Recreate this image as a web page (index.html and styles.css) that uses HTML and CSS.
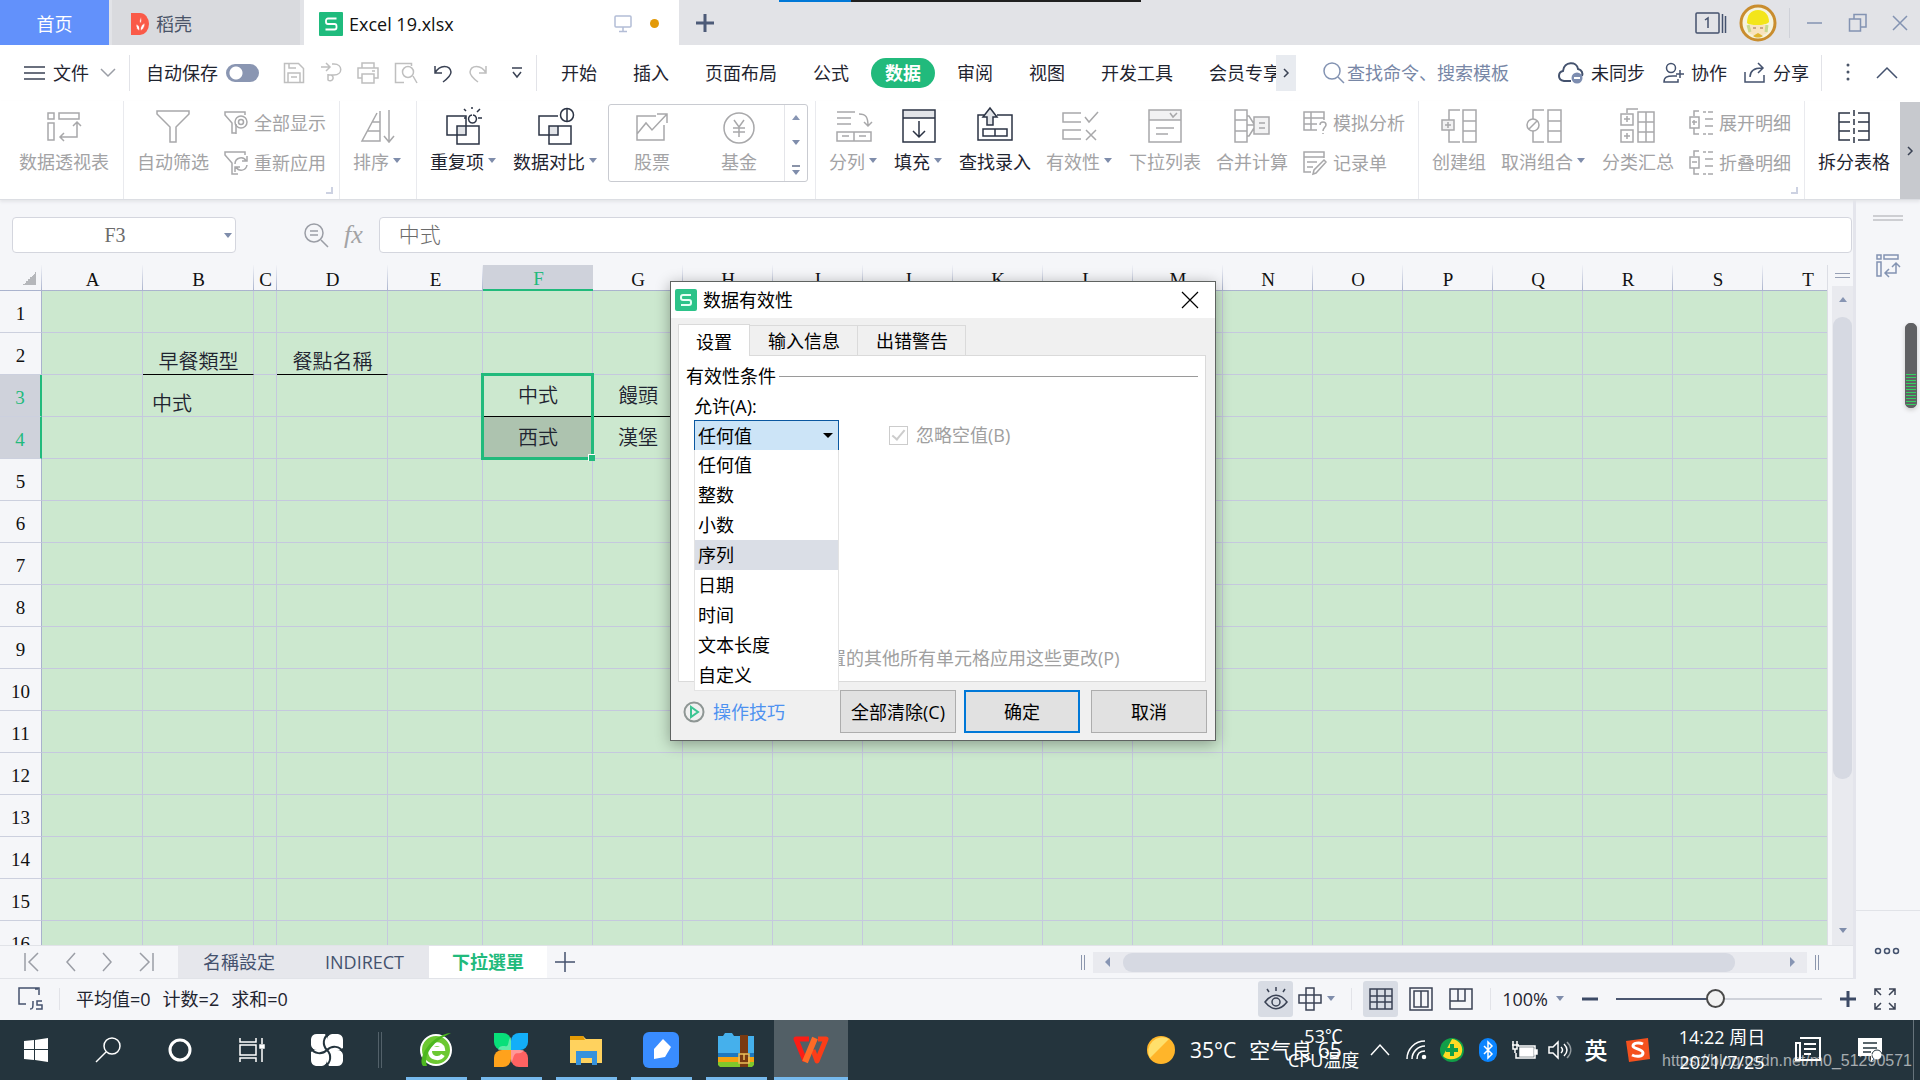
FILE: index.html
```html
<!DOCTYPE html>
<html lang="zh-CN">
<head>
<meta charset="utf-8">
<title>Excel 19.xlsx</title>
<link rel="stylesheet" href="styles.css">
</head>
<body>
<header class="titlebar">
  <div class="top-progress"></div>
  <button class="tab-home">首页</button>
  <button class="tab-docer">
    <svg width="18" height="22" viewBox="0 0 18 22"><path d="M0 0h9a9 11 0 0 1 0 22H0z" fill="#fa5a48"/><path d="M9 19V9M9 18c-3-1-4-3-4-7 3 1 4 3 4 7zM9 18c3-1 5-4 5-8-3 1-5 4-5 8zM9 11c-1-3 0-5 1-7 1 3 1 5-1 7z" fill="#fff" stroke="#fa5a48" stroke-width=".8"/></svg>
    <span>稻壳</span>
  </button>
  <button class="tab-file">
    <svg width="24" height="24" viewBox="0 0 24 24"><rect width="24" height="24" rx="1" fill="#1fbb7d"/><path d="M17.500 6.500H9a2 2 0 0 0-2 2v1.500a2 2 0 0 0 2 2h6.500a2 2 0 0 1 2 2v1.500a2 2 0 0 1-2 2H6.500" fill="none" stroke="#fff" stroke-width="1.800"/></svg>
    <span class="grow">Excel 19.xlsx</span>
    <svg class="line blue" width="18" height="18" viewBox="0 0 18 18"><rect x="1" y="1" width="16" height="11" rx="1"/><path d="M9 12v4M5 16.500h8"/></svg>
    <i class="dirty"></i>
  </button>
  <button class="plain add-tab" aria-label="新建"><svg width="20" height="20" viewBox="0 0 20 20"><path d="M10 1v18M1 10h18" stroke="#4d5b78" stroke-width="3"/></svg></button>
  <div class="window-tools">
    <svg class="line slate" width="32" height="24" viewBox="0 0 32 24"><rect x="1" y="2" width="23" height="20" rx="1"/><path d="M10 9l3-2v10M27.500 3v19M30.500 5v17"/></svg>
    <svg width="38" height="38" viewBox="0 0 38 38"><circle cx="19" cy="19" r="17" fill="#f5f3dd" stroke="#c98d2e" stroke-width="3"/><path d="M8 19c0-8 4-13 11-13s11 5 11 12c-3 4-19 4-22 1z" fill="#f3e51b"/><path d="M10 21h18l1 7c-5 5-15 5-20 0z" fill="#f8e3bd"/><path d="M9 21l2 7M28 21l-1 7" stroke="#c8d98d" stroke-width="3"/><path d="M14 32l5-3 5 3c-3 2-7 2-10 0z" fill="#e0b52e"/><path d="M14 24h3M21 24h3" stroke="#9b6b4b"/></svg>
    <i class="rule"></i>
    <svg class="line steel" width="18" height="18" viewBox="0 0 18 18"><path d="M1 9h15"/></svg>
    <svg class="line steel" width="20" height="20" viewBox="0 0 20 20"><rect x="1.500" y="6" width="11" height="12"/><path d="M6 6V1.500h12V14h-5"/></svg>
    <svg class="line steel" width="16" height="18" viewBox="0 0 16 18"><path d="M1 2l14 14M15 2L1 16"/></svg>
  </div>
</header>

<nav class="menubar">
  <button class="plain file-menu">
    <svg class="line dark" width="21" height="16" viewBox="0 0 21 16"><path d="M0 2h21M0 8h21M0 14h21"/></svg>
    <span>文件</span>
    <svg class="line gray" width="16" height="10" viewBox="0 0 16 10"><path d="M1 1l7 7 7-7"/></svg>
  </button>
  <i class="rule"></i>
  <label class="autosave">自动保存 <input type="checkbox" class="switch"></label>
  <div class="quick">
    <svg class="line pale" width="22" height="22" viewBox="0 0 22 22"><path d="M1.500 1.500h14l5 5v14h-19zM5 20V11h12v9M8 15h6M6 2v4h7"/></svg>
    <svg class="line pale" width="22" height="22" viewBox="0 0 22 22"><path d="M1 5h9M6 1l4 4-4 4M12 2h2c9 0 9 11 0 11H8v-1M8 12v6a3 3 0 1 0 3-5"/></svg>
    <svg class="line pale" width="22" height="22" viewBox="0 0 22 22"><path d="M5 6V1h12v5M5 16H1V6h20v10h-4M5 12h12v9H5zM15 9h3"/></svg>
    <svg class="line pale" width="24" height="22" viewBox="0 0 24 22"><path d="M10 20.500H1.500v-19h16V4M19 14l4 7"/><circle cx="14" cy="10" r="5.500"/></svg>
    <svg class="line dark" width="20" height="20" viewBox="0 0 20 20"><path d="M2 3v7h7M2 10c5-9 15-8 16-1 0 4-4 7-8 10"/></svg>
    <svg class="line pale" width="20" height="20" viewBox="0 0 20 20"><path d="M18 3v7h-7M18 10C13 1 3 2 2 9c0 4 4 7 8 10"/></svg>
    <svg class="line dark" width="12" height="12" viewBox="0 0 12 12"><path d="M1 1h10M2 5l4 5 4-5"/></svg>
  </div>
  <i class="rule"></i>
  <div class="menu-tabs">
    <button>开始</button><button>插入</button><button>页面布局</button><button>公式</button><button class="active">数据</button><button>审阅</button><button>视图</button><button>开发工具</button><button>会员专享</button>
  </div>
  <button class="tabs-more" aria-label="更多"><svg class="line dark" width="6" height="10" viewBox="0 0 6 10"><path d="M1 1l4 4-4 4"/></svg></button>
  <label class="search">
    <svg class="line steel" width="22" height="22" viewBox="0 0 22 22"><circle cx="9" cy="9" r="8"/><path d="M15 15l6 6"/></svg>
    <input type="text" placeholder="查找命令、搜索模板">
  </label>
  <button class="plain act">
    <svg class="line slate" width="26" height="22" viewBox="0 0 26 22"><path d="M13 19H6C-1 18 0 10 5 9 6-1 19-1 20 7c4 1 5 4 4 7" stroke-width="2"/><circle cx="19" cy="16" r="5.500" fill="#7d8db0" stroke="none"/><path d="M16 16h6" stroke="#fff" stroke-width="2"/></svg>
    <span>未同步</span>
  </button>
  <button class="plain act">
    <svg class="line slate" width="22" height="22" viewBox="0 0 22 22"><circle cx="9" cy="6" r="4.500"/><path d="M15 14h-4c-6 0-9 1-9 6h14v-3M18 8v8M14 12h8"/></svg>
    <span>协作</span>
  </button>
  <button class="plain act">
    <svg class="line slate" width="22" height="22" viewBox="0 0 22 22"><path d="M1 10v10h19v-7M6 15c0-7 5-9 12-9M14 1l5 5-5 5"/></svg>
    <span>分享</span>
  </button>
  <i class="rule"></i>
  <div class="menu-end">
    <svg width="4" height="20" viewBox="0 0 4 20" fill="#4a5568"><circle cx="2" cy="2" r="1.500"/><circle cx="2" cy="9" r="1.500"/><circle cx="2" cy="16" r="1.500"/></svg>
    <svg class="line slate" width="22" height="12" viewBox="0 0 22 12"><path d="M1 11L11 1l10 10"/></svg>
  </div>
</nav>

<section class="ribbon">
  <div class="group">
    <button class="tool off"><svg width="36" height="36" viewBox="0 0 36 36"><path d="M2 5h6v6H2zM13 5h20v6H13zM2 15h6v17H2zM14 29h17V14M27 18l4-4 4 4M18 25l-4 4 4 4"/></svg><span>数据透视表</span></button>
  </div>
  <div class="group">
    <button class="tool off"><svg width="36" height="36" viewBox="0 0 36 36"><path d="M2 3h32v3L21 19v15h-6V19L2 6z"/></svg><span>自动筛选</span></button>
    <div class="pair">
      <button class="mini"><svg width="24" height="24" viewBox="0 0 24 24"><path d="M12 22H8V12L1 4V1h20v3M12 13v10"/><circle cx="17" cy="11" r="6"/><circle cx="17" cy="11" r="2.500"/></svg>全部显示</button>
      <button class="mini"><svg width="24" height="24" viewBox="0 0 24 24"><path d="M14 23H8V12L1 4V1h20v3M11 13c0-7 9-8 11-3M23 5v5h-5M23 14c-1 6-8 7-11 2M11 21v-5h5"/></svg>重新应用</button>
    </div>
    <i class="corner"></i>
  </div>
  <div class="group">
    <button class="tool off"><svg width="36" height="36" viewBox="0 0 36 36"><path d="M20 3v30H2L17 5M12 14h8M7 23h13M29 2v31M24 28l5 6 5-6"/></svg><span class="has-caret">排序</span></button>
  </div>
  <div class="group wide">
    <button class="tool"><svg width="36" height="36" viewBox="0 0 36 36"><path class="shade" d="M11 18h9v9h-9z"/><path d="M1 8h19v19H1zM11 18h22v18H11zM26 7a4 4 0 1 0 1 0M26 1V-1M20 3l-2-2M31 4l3-3M32 10h4M20 10h-2"/></svg><span class="has-caret">重复项</span></button>
    <button class="tool"><svg width="36" height="36" viewBox="0 0 36 36"><path class="shade" d="M11 18h9v9h-9z"/><path d="M20 8H1v19h19V18M11 18h22v18H11zM29 0v14"/><circle cx="29" cy="7" r="6.500"/></svg><span class="has-caret">数据对比</span></button>
    <div class="gallery">
      <button class="tool off"><svg width="36" height="36" viewBox="0 0 36 36"><path d="M22 8H3v24h27V17M3 26l9-11 6 7L33 6M23 6h10v9"/></svg><span>股票</span></button>
      <button class="tool off"><svg width="36" height="36" viewBox="0 0 36 36"><circle cx="18" cy="20" r="15"/><path d="M13 12l5 7 5-7M18 19v10M12 20h12M12 24h12"/></svg><span>基金</span></button>
      <div class="spin"><i class="tri up"></i><i class="tri"></i><i class="tri bar"></i></div>
    </div>
  </div>
  <div class="group">
    <button class="tool off"><svg width="36" height="36" viewBox="0 0 36 36"><path d="M1 4h18M1 10h14M1 16h14M23 6c7 0 9 3 9 12M28 14l4 4 4-4M1 24h34v9H1zM18 24v9M6 28h7M23 28h7"/></svg><span class="has-caret">分列</span></button>
    <button class="tool"><svg width="36" height="36" viewBox="0 0 36 36"><path class="shade" d="M2 2h32v8H2z"/><path d="M2 2h32v32H2zM2 10h32M18 13v15M12 23l6 6 6-6"/></svg><span class="has-caret">填充</span></button>
    <button class="tool"><svg width="36" height="36" viewBox="0 0 36 36"><path d="M7 7H1v25h34V7H20M6 21h24v7H6zM18 21v7"/><path class="shade ink" d="M10 17V9H6l7-9 7 9h-4v8z"/></svg><span>查找录入</span></button>
    <button class="tool off"><svg width="36" height="36" viewBox="0 0 36 36"><path d="M19 5H1v9h18M19 22H1v9h18M23 9l4 5 9-10M24 22l10 10M34 22L24 32"/></svg><span class="has-caret">有效性</span></button>
    <button class="tool off"><svg width="36" height="36" viewBox="0 0 36 36"><path class="shade" d="M2 2h32v10H2z"/><path d="M2 2h32v32H2zM2 12h32M23 5l3 4 4-4M9 20h18M9 26h12"/></svg><span>下拉列表</span></button>
    <button class="tool off"><svg width="36" height="36" viewBox="0 0 36 36"><path class="shade" d="M20 9h15v17H20z"/><path d="M1 2h12v32H1zM1 12h12M1 23h12M13 8h2l5 8M13 17h7M13 28h2l5-8M20 9h15v17H20zM25 15h6M25 20h6"/></svg><span>合并计算</span></button>
    <div class="pair">
      <button class="mini"><svg width="24" height="24" viewBox="0 0 24 24"><path d="M14 19H1V1h20v8M1 7h20M1 13h13M8 1v18M17 14c0-4 6-4 6 0 0 2-3 3-3 6M20 22v1"/></svg>模拟分析</button>
      <button class="mini"><svg width="24" height="24" viewBox="0 0 24 24"><path d="M8 21H1V1h20v6M1 6h20M4 11h10M4 16h6M23 11L13 22l-3 1 1-4L21 9z"/></svg>记录单</button>
    </div>
  </div>
  <div class="group">
    <button class="tool off"><svg width="36" height="36" viewBox="0 0 36 36"><path class="shade" d="M1 12h12v10H1z"/><path d="M19 2H8v10M8 22v12h11M1 12h12v10H1zM4 17h6M7 14v6M22 2h13v32H22zM22 13h13M22 23h13"/></svg><span>创建组</span></button>
    <button class="tool off"><svg width="36" height="36" viewBox="0 0 36 36"><path d="M18 2H7v9M7 23v11h11M22 2h13v32H22zM22 13h13M22 23h13M3 21L11 13"/><circle cx="7" cy="17" r="6"/></svg><span class="has-caret">取消组合</span></button>
    <button class="tool off"><svg width="36" height="36" viewBox="0 0 36 36"><path d="M7 5V1h11M1 6h12v11H1zM1 22h12v12H1zM4 11h6M7 8v6M4 28h6M7 25v6M18 4h16v30H18zM26 4v30M18 14h16M18 24h16"/></svg><span>分类汇总</span></button>
    <div class="pair">
      <button class="mini"><svg width="24" height="24" viewBox="0 0 24 24"><path d="M10 0H5v5M5 17v6h5M1 6h9v11H1zM3 11h5M5 9v5M14 1h3M19 1h5M16 8h8M16 15h8M14 23h3M19 23h5"/></svg>展开明细</button>
      <button class="mini"><svg width="24" height="24" viewBox="0 0 24 24"><path d="M10 0H5v5M5 17v6h5M1 6h9v11H1zM3 11h5M14 1h3M19 1h5M16 8h8M16 15h8M14 23h3M19 23h5"/></svg>折叠明细</button>
    </div>
    <i class="corner"></i>
  </div>
  <div class="group last">
    <button class="tool"><svg width="36" height="36" viewBox="0 0 36 36"><path d="M14 5H3v27h11M22 5h11v27H22M3 14h11M3 23h11M22 14h11M22 23h11"/><path d="M18 2v34" stroke-dasharray="6 3"/></svg><span>拆分表格</span></button>
  </div>
  <button class="ribbon-more" aria-label="更多"><svg class="line dark" width="6" height="10" viewBox="0 0 6 10"><path d="M1 1l4 4-4 4"/></svg></button>
</section>

<main class="workspace">
  <div class="book">
    <div class="formula-row">
      <div class="namebox"><input type="text" value="F3" aria-label="名称框"><i class="tri"></i></div>
      <div class="fx">
        <svg class="line gray" width="25" height="25" viewBox="0 0 25 25"><circle cx="10" cy="10" r="9"/><path d="M17 17l7 7M6 8h8M6 12h8"/></svg>
        <span>fx</span>
      </div>
      <input class="formula" type="text" value="中式" aria-label="编辑栏">
    </div>
    <div class="sheet-row">
      <div class="sheet">
        <table class="cells">
          <colgroup id="cols"></colgroup>
          <thead id="head"></thead>
          <tbody id="body"></tbody>
        </table>
      </div>
      <div class="vscroll">
        <i class="split"></i>
        <div class="vtrack"><i class="tri up"></i><i class="vthumb"></i><i class="tri"></i></div>
      </div>
    </div>
    <div class="sheet-tabs">
      <div class="sheet-nav">
        <svg class="line gray" width="16" height="20" viewBox="0 0 16 20"><path d="M1 1v18M14 1L5 10l9 9"/></svg>
        <svg class="line gray" width="10" height="20" viewBox="0 0 10 20"><path d="M9 1L1 10l8 9"/></svg>
        <svg class="line gray" width="10" height="20" viewBox="0 0 10 20"><path d="M1 1l8 9-8 9"/></svg>
        <svg class="line gray" width="16" height="20" viewBox="0 0 16 20"><path d="M15 1v18M2 1l9 9-9 9"/></svg>
      </div>
      <button class="stab">名稱設定</button><button class="stab">INDIRECT</button><button class="stab active">下拉選單</button>
      <button class="plain add-sheet" aria-label="新建工作表"><svg class="line slate" width="20" height="20" viewBox="0 0 20 20"><path d="M10 0v20M0 10h20"/></svg></button>
      <div class="hscroll">
        <i class="grip"></i>
        <div class="htrack"><i class="tri left"></i><i class="hthumb"></i><i class="tri right"></i></div>
        <i class="grip"></i>
      </div>
    </div>
  </div>
  <aside class="side">
    <i class="side-grip"></i>
    <svg class="line steel" width="24" height="24" viewBox="0 0 24 24"><path d="M1 1h4v4H1zM8 1h14v4H8zM1 8h4v14H1zM10 19h10V10M16 13l4-4 4 4M13 15l-4 4 4 4"/></svg>
    <div class="side-foot"><svg class="line slate" width="26" height="8" viewBox="0 0 26 8"><circle cx="4" cy="4" r="2.500"/><circle cx="13" cy="4" r="2.500"/><circle cx="22" cy="4" r="2.500"/></svg></div>
    <div class="meter"></div>
  </aside>
</main>

<footer class="status">
  <svg class="line slate" width="25" height="24" viewBox="0 0 25 24"><path d="M8 17H1V1h20v7M17 2h3M12 22c3 0 3-1 3-8M24 14h-5v4h5v4h-6"/></svg>
  <i class="rule"></i>
  <div class="stats"><span>平均值=0</span><span>计数=2</span><span>求和=0</span></div>
  <div class="views">
    <button class="view on" aria-label="护眼"><svg class="line dark" width="26" height="24" viewBox="0 0 26 24"><path d="M2 15c7-9 15-9 22 0-7 9-15 9-22 0zM13 0v4M4 2l2 3M22 2l-2 3"/><circle cx="13" cy="15" r="4"/></svg></button>
    <svg class="line dark" width="24" height="24" viewBox="0 0 24 24"><path d="M8 1h8v22H8zM1 8h22v8H1z"/></svg>
    <i class="tri"></i>
    <i class="rule"></i>
    <button class="view on" aria-label="普通视图"><svg class="line dark" width="24" height="22" viewBox="0 0 24 22"><path d="M1 1h22v20H1zM1 8h22M1 14h22M8 1v20M16 1v20"/></svg></button>
    <button class="view" aria-label="分页预览"><svg class="line dark" width="24" height="24" viewBox="0 0 24 24"><path d="M1 1h22v22H1zM5 4h14v16H5zM12 4v16"/></svg></button>
    <button class="view" aria-label="阅读版式"><svg class="line dark" width="24" height="24" viewBox="0 0 24 24"><path d="M1 2h22v20H1zM1 14h15V2M9 2v12"/></svg></button>
    <i class="rule"></i>
    <span class="percent">100%</span><i class="tri"></i>
  </div>
  <div class="zoom">
    <svg width="16" height="16" viewBox="0 0 16 16"><path d="M0 8h16" stroke="#3c4a66" stroke-width="3"/></svg>
    <input type="range" min="0" max="100" value="48" aria-label="缩放">
    <svg width="16" height="16" viewBox="0 0 16 16"><path d="M0 8h16M8 0v16" stroke="#3c4a66" stroke-width="3"/></svg>
    <svg class="line dark" width="22" height="22" viewBox="0 0 22 22"><path d="M1 7V1h6M1 1l6 6M15 1h6v6M21 1l-6 6M1 15v6h6M1 21l6-6M21 15v6h-6M21 21l-6-6"/></svg>
  </div>
</footer>

<footer class="taskbar">
  <div class="sys"><svg width="24" height="24" viewBox="0 0 24 24"><path fill="#fff" d="M0 3l10-1v9H0zM11 2l13-2v11H11zM0 12h10v10L0 21zM11 12h13v12l-13-2z"/></svg></div>
  <div class="sys"><svg class="line white" width="26" height="26" viewBox="0 0 26 26"><circle cx="17" cy="9" r="8"/><path d="M11 15L1 25"/></svg></div>
  <div class="sys"><svg width="26" height="26" viewBox="0 0 26 26"><circle cx="13" cy="13" r="10" fill="none" stroke="#fff" stroke-width="3"/></svg></div>
  <div class="sys"><svg class="line white" width="26" height="26" viewBox="0 0 26 26"><path d="M1 1v4h16V1M1 8h16v10H1zM1 25v-4h16v4M23 1v6M23 12v13"/><path d="M21 8h4v3h-4z" fill="#fff"/></svg></div>
  <div class="sys wide"><svg width="32" height="32" viewBox="0 0 32 32"><g fill="#fff"><path d="M6 0h8l2 4v12H6a6 6 0 0 1-6-5V5a6 6 0 0 1 6-5z"/><path d="M32 6v8l-4 2H16V6a6 6 0 0 1 5-6h6a6 6 0 0 1 5 6z"/><path d="M26 32h-8l-2-4V16h10a6 6 0 0 1 6 5v6a6 6 0 0 1-6 5z"/><path d="M0 26v-8l4-2h12v10a6 6 0 0 1-5 6H5a6 6 0 0 1-5-6z"/></g><path d="M18 0C12 3 11 11 16 16M32 18C29 12 21 11 16 16M14 32C20 29 21 21 16 16M0 14C3 20 11 21 16 16" fill="none" stroke="#24343d" stroke-width="2"/></svg></div>
  <i class="double"></i>
  <div class="app"><svg width="36" height="36" viewBox="0 0 36 36"><circle cx="18" cy="18" r="15" fill="#6cc832" stroke="#fff" stroke-width="2"/><path d="M25 23c-3 5-13 4-13-4s12-9 13-2H12" fill="none" stroke="#fff" stroke-width="4"/><path d="M5 34C-1 27 12 3 33 1 17 8 5 21 9 34z" fill="#4cb81f"/></svg></div>
  <div class="app"><svg width="36" height="36" viewBox="0 0 36 36"><path d="M1 1h9a8 8 0 0 1 8 8v9H9a8 8 0 0 1-8-8z" fill="#08df79"/><path d="M35 1h-9a8 8 0 0 0-8 8v9h9a8 8 0 0 0 8-8z" fill="#13aef8"/><path d="M1 35h9a8 8 0 0 0 8-8v-9H9a8 8 0 0 0-8 8z" fill="#ffa21c"/><path d="M35 35h-9a8 8 0 0 1-8-8v-9h9a8 8 0 0 1 8 8z" fill="#ff6262"/><path d="M18 5v13H5c2-6 7-3 9-4s1-7 4-9zM31 18H18v13c2-2 2-7 4-9s6 1 9-4z" fill="#fff" opacity=".35"/></svg></div>
  <div class="app"><svg width="34" height="30" viewBox="0 0 34 30"><path d="M1 1h13l3 3h16v24H1z" fill="#ffd25e"/><path d="M1 1h13l2 4H1z" fill="#e49b05"/><path d="M7 16h21v14h-5v-7H12v7H7z" fill="#3692dd"/></svg></div>
  <div class="app"><svg width="36" height="36" viewBox="0 0 36 36"><rect width="36" height="36" rx="6" fill="#398cff"/><path d="M20 7l8 8-6 10-11 2 0-10z" fill="#fff"/></svg></div>
  <div class="app"><svg width="36" height="34" viewBox="0 0 36 34"><path d="M0 24h36v8l-2 2H2l-2-2z" fill="#80c82b"/><path d="M0 20h36v9H0z" fill="#f4a112"/><path d="M0 3h5l2-3h7l2 3h20v20H0z" fill="#45b0ec"/><path d="M0 20h36v4H0z" fill="#1e78be"/><path d="M22 2h8v32h-8z" fill="#7a3a11"/><path d="M21 21h10v9H21zM26 21v6" fill="none" stroke="#ecc05a" stroke-width="1.500"/></svg></div>
  <div class="app active"><svg width="36" height="28" viewBox="0 0 36 28" fill="none" stroke-width="5" stroke-linejoin="round"><path d="M16 3H3l9 22" stroke="#fb1d16"/><path d="M20 14l4 11 9-22h-8" stroke="#fb3d18"/><path d="M12 26L22 2" stroke="#ff6a26" stroke-width="6"/></svg></div>
  <div class="tray">
    <svg width="28" height="28" viewBox="0 0 28 28"><circle cx="14" cy="14" r="14" fill="#ffb52a"/><path d="M3 22A14 14 0 0 1 22 3z" fill="#ffdf6b"/></svg>
    <div class="weather"><span>35°C</span><span>空气良 65</span><div class="cpu">53℃<br>CPU温度</div></div>
    <div class="cell"><svg class="line white" width="20" height="12" viewBox="0 0 20 12"><path d="M1 11l9-10 9 10"/></svg></div>
    <div class="cell"><svg class="line white" width="20" height="20" viewBox="0 0 20 20"><path d="M1 19C1 9 9 1 19 1M6 19C6 12 12 6 19 6M11 19c0-5 3-8 8-8"/><circle cx="18" cy="17" r="1.500" fill="#fff"/></svg></div>
    <div class="cell"><svg width="24" height="24" viewBox="0 0 24 24"><circle cx="12" cy="12" r="12" fill="#119e48"/><path d="M12 1a11 11 0 0 1 9 16c-6 7-16 4-18 1z" fill="#ffdb24"/><path d="M12 6v12M6 12h12" stroke="#119e48" stroke-width="4"/></svg></div>
    <div class="cell"><svg width="18" height="24" viewBox="0 0 18 24"><rect width="18" height="24" rx="9" fill="#0a84ff"/><path d="M5 8l8 8-4 4V4l4 4-8 8" fill="none" stroke="#fff" stroke-width="1.500"/></svg></div>
    <div class="cell"><svg class="line white" width="26" height="18" viewBox="0 0 26 18"><path d="M7 5h17v12H5v-5M1 4h7M2 0v4M6 0v4M2 4v4h4V4M4 8v4"/><path fill="#fff" d="M9 7h13v8H9zM24 9h2v4h-2z"/></svg></div>
    <div class="cell"><svg class="line white" width="24" height="20" viewBox="0 0 24 20"><path d="M1 7h4l5-5v16l-5-5H1zM13 7c2 2 2 4 0 6M16 4c4 4 4 8 0 12"/><path d="M19 2c5 5 5 11 0 16" opacity=".5"/></svg></div>
    <div class="cell ime">英</div>
    <div class="cell sogou"><svg width="26" height="24" viewBox="0 0 26 24"><path d="M1 3l22-3 2 21-21 3z" fill="#f4511e"/><path d="M18 6c-4-2-10-1-10 2s10 3 10 7-7 4-11 2" fill="none" stroke="#fff" stroke-width="3"/></svg></div>
    <div class="clock">14:22 周日<br>2021/7/25</div>
    <div class="cell notes"><svg class="line white" width="26" height="26" viewBox="0 0 26 26"><path d="M5 1h20v22H1V6h4v17M9 7h12M9 12h12M9 17h7" stroke-width="2"/></svg></div>
    <div class="cell notif"><svg width="26" height="26" viewBox="0 0 26 26"><path d="M1 1h24v18h-6l-5 6v-6H1z" fill="#fff"/><path d="M6 6h14M6 11h14M6 15h8" stroke="#24343d" stroke-width="1.500"/><circle cx="20" cy="18" r="5" fill="#fff" stroke="#24343d"/></svg></div>
    <i class="peek"></i>
  </div>
  <div class="credit">https://blog.csdn.net/m0_51290571</div>
</footer>

<section class="dialog" role="dialog" aria-label="数据有效性">
  <div class="dlg-title">
    <svg width="22" height="22" viewBox="0 0 22 22"><rect width="22" height="22" rx="2" fill="#2cc389"/><path d="M16 6H8a2 2 0 0 0-2 2v1a2 2 0 0 0 2 2h6a2 2 0 0 1 2 2v1a2 2 0 0 1-2 2H6" fill="none" stroke="#e6fff5" stroke-width="2"/></svg>
    <span>数据有效性</span>
    <button class="plain" aria-label="关闭"><svg width="16" height="16" viewBox="0 0 16 16"><path d="M0 0l16 16M16 0L0 16" stroke="#000" stroke-width="1.200"/></svg></button>
  </div>
  <div class="dlg-body">
    <div class="dlg-tabs"><button class="active">设置</button><button>输入信息</button><button>出错警告</button></div>
    <div class="dlg-panel">
      <div class="legend">有效性条件</div>
      <label class="allow" for="allow">允许(A):</label>
      <div class="allow-row">
        <div class="combo">
          <select id="allow"><option>任何值</option></select>
          <ul class="options"><li>任何值</li><li>整数</li><li>小数</li><li class="hover">序列</li><li>日期</li><li>时间</li><li>文本长度</li><li>自定义</li></ul>
        </div>
        <label class="check"><input type="checkbox" checked disabled> 忽略空值(B)</label>
      </div>
      <label class="check apply"><input type="checkbox" disabled> 对有同样设置的其他所有单元格应用这些更改(P)</label>
    </div>
    <div class="dlg-foot">
      <a href="#" class="tips"><svg width="22" height="22" viewBox="0 0 22 22"><circle cx="11" cy="11" r="9.500" fill="none" stroke="#8e9694" stroke-width="2"/><path d="M8 6v10l7-5z" fill="none" stroke="#3cc593" stroke-width="2"/></svg>操作技巧</a>
      <button>全部清除(C)</button><button class="primary">确定</button><button>取消</button>
    </div>
  </div>
</section>
<script src="app.js"></script>
</body>
</html>
```
FILE: styles.css
```css
* { box-sizing: border-box; }
body {
  margin: 0; height: 100vh; display: flex; flex-direction: column; overflow: hidden;
  font: 400 18px/24px "Open Sans", "Noto Sans CJK SC", "Noto Sans CJK TC", sans-serif;
  color: #1f2430; background: #f5f6f9; position: relative;
}
button, input, select { font: inherit; color: inherit; border: 0; background: none; padding: 0; margin: 0; border-radius: 0; }
button { white-space: nowrap; }
svg { display: block; flex: none; overflow: visible; }
i { display: block; flex: none; }
.plain { display: flex; align-items: center; }
.line { fill: none; stroke-width: 1.500px; }
.line.dark { stroke: #3a4254; }
.line.gray { stroke: #9b9ea6; }
.line.pale { stroke: #bfbfbf; }
.line.blue { stroke: #b3bdd6; }
.line.steel { stroke: #8393b2; }
.line.slate { stroke: #44526e; }
.line.white { stroke: #fff; }
.rule { width: 1px; height: 36px; background: #e2e3e8; }
.grow { flex: 1; text-align: left; }
.tri { width: 0; height: 0; border: 4px solid transparent; border-top: 5px solid #7f8dab; border-bottom: 0; }
.tri.up { border-top: 0; border-bottom: 5px solid #8795b3; }
.tri.left { border: 5px solid transparent; border-right-color: #8795b3; border-left: 0; }
.tri.right { border: 5px solid transparent; border-left-color: #8795b3; border-right: 0; }

.titlebar { flex: none; height: 45px; display: flex; background: #e2e3e7; position: relative; }
.top-progress { position: absolute; top: 0; left: 779px; width: 362px; height: 2px; background: linear-gradient(90deg, #0078d7 20%, #202020 20%); }
.tab-home { width: 109px; padding-top: 2px; background: #6291fb; color: #fff; }
.tab-docer { width: 188px; margin: 0 4px 0 3px; padding: 2px 0 0 19px; background: #d9dade; display: flex; align-items: center; gap: 7px; color: #4a5468; }
.tab-file { width: 375px; padding: 2px 20px 0 15px; background: #fff; display: flex; align-items: center; gap: 6px; color: #111; }
.dirty { width: 9px; height: 9px; border-radius: 50%; background: #e39a08; margin-left: 12px; }
.add-tab { margin-left: 16px; }
.window-tools { margin-left: auto; display: flex; align-items: center; gap: 12px; padding-right: 12px; }
.window-tools .steel { margin-left: 4px; margin-right: 8px; }
.window-tools .steel:last-child { margin-right: 0; }
.window-tools .rule { background: #cfd1d8; height: 30px; }

.menubar { flex: none; height: 56px; display: flex; align-items: center; background: #fff; }
.file-menu { padding: 0 13px 0 24px; gap: 8px; }
.file-menu span { margin-right: 3px; }
.autosave { display: flex; align-items: center; gap: 8px; padding: 0 24px 0 16px; white-space: nowrap; }
.switch { appearance: none; width: 33px; height: 18px; border-radius: 9px; background: radial-gradient(circle at 10px 9px, #fff 6px, #8a96b2 7px); }
.quick { display: flex; align-items: center; gap: 15px; padding-right: 13px; }
.quick svg:last-child { margin-left: 8px; }
.menu-tabs { flex: 1; min-width: 0; display: flex; overflow: hidden; padding-left: 6px; }
.menu-tabs button { flex: none; height: 30px; padding: 0 14px; margin: 0 4px; border-radius: 15px; }
.menu-tabs .active { background: #21ba7c; color: #fff; font-weight: 700; }
.tabs-more { width: 20px; height: 36px; background: #e8ebf0; display: grid; place-items: center; }
.search { display: flex; align-items: center; gap: 2px; margin-left: 27px; }
.search input { width: 211px; }
.search input::placeholder { color: #7887a6; opacity: 1; }
.act { gap: 7px; margin-right: 17px; }
.menubar .act + .rule { margin-left: -5px; }
.menu-end { display: flex; align-items: center; gap: 26px; padding: 0 22px 0 24px; }

.ribbon { flex: none; height: 99px; display: flex; background: #fff; border-bottom: 1px solid #dcdee3; box-shadow: 0 2px 3px #e4e5e9; position: relative; z-index: 1; overflow: hidden; }
.group { flex: none; display: flex; gap: 15px; padding: 0 13px; border-right: 1px solid #e9eaee; position: relative; }
.group:first-child { padding-left: 19px; padding-right: 14px; }
.group.wide { padding-right: 7px; }
.group.last { border: 0; flex: 1; min-width: 0; padding-right: 0; overflow: hidden; }
.tool { flex: none; display: flex; flex-direction: column; align-items: center; padding-top: 7px; gap: 6px; }
.tool svg, .mini svg { fill: none; stroke: #2b3344; stroke-width: 1.500px; }
.tool .shade { fill: #e2e4e8; stroke: none; }
.tool .shade.ink { stroke: #2b3344; }
.off, .mini { color: #a3a3a5; }
.tool.off svg, .mini svg { stroke: #a8a8aa; }
.off .shade { fill: #f2f2f3; }
.has-caret { display: flex; align-items: flex-start; gap: 4px; padding-right: 2px; }
.has-caret::after { content: ""; margin-top: 8px; border: 4px solid transparent; border-top: 5px solid #7f8dab; border-bottom: 0; }
.pair { display: flex; flex-direction: column; padding-top: 2px; }
.mini { height: 40px; display: flex; align-items: center; gap: 6px; }
.corner { position: absolute; right: 6px; bottom: 5px; width: 7px; height: 7px; border: solid #cdd2e2; border-width: 0 2px 2px 0; }
.gallery { display: flex; height: 78px; margin: 3px 0 0 -6px; border: 1px solid #c9cbd1; border-radius: 3px; padding-left: 25px; gap: 51px; }
.gallery .tool { padding-top: 3px; }
.spin { width: 23px; margin-left: -24px; border-left: 1px solid #e4e5e9; display: flex; flex-direction: column; }
.spin .tri { margin: 10px 7px; }
.spin .bar { position: relative; margin-top: 15px; }
.spin .bar::before { content: ""; position: absolute; left: -4px; top: -10px; width: 8px; height: 2px; background: #8a93a8; }
.ribbon-more { flex: none; width: 20px; margin-top: 1px; background: #c7c9ce; display: grid; place-items: center; }

.workspace { flex: 1; min-height: 0; display: flex; }
.book { flex: 1; min-width: 0; display: flex; flex-direction: column; }
.formula-row { flex: none; height: 65px; padding: 17px 1px 12px 12px; display: flex; }
.namebox { width: 224px; display: flex; align-items: center; padding-right: 3px; background: #fff; border: 1px solid #d4d6de; border-radius: 4px; }
.namebox input { flex: 1; min-width: 0; text-align: center; padding-right: 7px; font: 20px/24px "Liberation Serif", serif; color: #6b6b6b; }
.fx { display: flex; align-items: center; gap: 15px; padding: 0 16px 0 68px; color: #a3a3a5; }
.fx span { font: italic 26px/24px "Liberation Serif", serif; }
.formula { flex: 1; min-width: 0; padding: 0 19px 4px; background: #fff; border: 1px solid #d4d6de; border-radius: 4px; font-family: "Noto Sans CJK TC", sans-serif; font-size: 21px; font-weight: 300; color: #6b6b6b; }
.formula-row > * { height: 36px; }
.sheet-row { flex: 1; min-height: 0; display: flex; }
.sheet { flex: 1; min-width: 0; overflow: hidden; border-right: 1px solid #dcdee5; }
.cells { table-layout: fixed; width: 1853px; border-collapse: separate; border-spacing: 0; font-family: "Noto Sans CJK TC", sans-serif; font-size: 20px; font-weight: 350; }
.c-head { width: 42px; }
.c-a { width: 101px; }
.c-b, .c-d { width: 111px; }
.c-c { width: 23px; }
.c-e { width: 95px; }
.c-f { width: 110px; }
.c-std { width: 90px; }
.cells th, .cells td { padding: 0; line-height: 24px; overflow: hidden; white-space: nowrap; }
.cells th { font: 19px/21px "Liberation Serif", serif; color: #111; }
.cells thead th { height: 26px; padding: 3px 0 0 1px; border-image: linear-gradient(#f5f6f9, #a9b2cd) 1; border-style: solid; border-width: 0 1px 1px 0; }
.cells thead th.sel { background: #cfd2db; border-image: none; border-color: #21ba7c; border-width: 0 0 2px; color: #21ba7c; }
.cells thead th.all { background: linear-gradient(135deg, transparent 50%, #b5b7bb 50%) 23px 7px / 13px 13px no-repeat; }
.cells tbody th { height: 42px; border-right: 1px solid #a9b2cd; border-bottom: 1px solid #ccd0de; padding-top: 4px; }
.cells tbody th.sel { background: #cfd2db; color: #21ba7c; border-right: 2px solid #21ba7c; }
.cells td { height: 42px; padding-bottom: 2px; background: #cce8cf; border-right: 1px solid #c5c8de; border-bottom: 1px solid #c5c8de; }
.cells td.under { border-bottom-color: #000; }
.cells td.center { text-align: center; padding-left: 1px; }
.cells td.low { vertical-align: bottom; padding-bottom: 1px; }
.cells td.indent { padding-left: 9px; }
.cells td.shade { background: #adc3af; }
.cells td.anchor { position: relative; overflow: visible; }
.selection { position: absolute; z-index: 1; left: -2px; top: -2px; right: -2px; height: 87px; border: 3px solid #21ba7c; }
.selection::after { content: ""; position: absolute; right: -4px; bottom: -4px; width: 6px; height: 6px; background: #21ba7c; border: solid #fff; border-width: 1px 0 0 1px; }
.vscroll { width: 25px; padding-left: 4px; display: flex; flex-direction: column; }
.split { width: 15px; height: 5px; margin: 8px 0 8px 3px; border: solid #97a0b5; border-width: 1px 0; }
.vtrack { flex: 1; background: #e9eaef; display: flex; flex-direction: column; align-items: center; padding: 11px 0 12px; }
.vthumb { width: 19px; height: 462px; margin: 15px 0 auto; border-radius: 9px; background: #d6d9e2; }
.sheet-tabs { flex: none; height: 34px; display: flex; border: solid #e1e3e8; border-width: 1px 0; }
.sheet-nav { display: flex; align-items: center; gap: 26px; padding: 0 24px; }
.stab { padding: 0 25px; background: #e6e7ec; color: #44526e; }
.stab.active { background: #fff; color: #21ba7c; font-weight: 700; padding: 0 23px; }
.add-sheet { margin-left: 8px; }
.hscroll { flex: 1; display: flex; align-items: center; justify-content: flex-end; gap: 8px; padding-right: 34px; }
.grip { width: 4px; height: 15px; border: solid #8b96ad; border-width: 0 1px; }
.htrack { width: 40%; min-width: 714px; height: 21px; background: #e9eaef; display: flex; align-items: center; padding: 0 12px; }
.hthumb { width: 612px; height: 19px; margin: 0 auto 0 13px; border-radius: 9px; background: #d6d9e2; }
.side { flex: none; width: 67px; border-left: 3px solid #e4e5ec; display: flex; flex-direction: column; align-items: center; position: relative; }
.side-grip { width: 30px; height: 6px; margin: 15px 0 33px; border: solid #cdced2; border-width: 2px 0; }
.side-foot { margin-top: auto; width: 100%; height: 69px; padding: 36px 0 0 18px; border-top: 1px solid #e1e3e8; }
.meter { position: absolute; right: 3px; top: 123px; width: 12px; height: 85px; border-radius: 5px; border: 1px solid #606164; background: repeating-linear-gradient(0deg, #606164 0 2px, #35d061 2px 3px) bottom / 100% 34px no-repeat #606164; box-shadow: 0 2px 4px #ccc; }

.status { flex: none; height: 41px; display: flex; align-items: center; padding: 0 24px 2px 18px; }
.status .rule { height: 22px; margin: 0 16px; }
.stats { display: flex; gap: 12px; }
.views { margin-left: auto; display: flex; align-items: center; gap: 5px; }
.views .rule { margin: 0 6px 0 11px; }
.views .view + .rule { margin: 0 4px 0 7px; }
.view { width: 35px; height: 36px; border-radius: 3px; display: grid; place-items: center; }
.view.on { background: #d8dce4; }
.percent { margin: 0 3px 0 2px; }
.zoom { display: flex; align-items: center; gap: 18px; margin-left: 18px; }
.zoom input { appearance: none; width: 206px; height: 20px; background: linear-gradient(90deg, #4a5670 48%, #cfd2da 48%) center / 100% 2px no-repeat; }
.zoom input::-webkit-slider-thumb { appearance: none; width: 19px; height: 19px; border-radius: 50%; background: #f3f3f3; border: 2px solid #4a4a4a; }

.taskbar { flex: none; height: 60px; display: flex; background: #24343d; position: relative; color: #fff; }
.sys, .cell { display: grid; place-items: center; flex: none; }
.sys { width: 72px; }
.sys.wide { width: 77px; }
.double { width: 4px; height: 36px; margin: 12px 17px 0 13px; border: solid #53616a; border-width: 0 1px; }
.app { width: 74px; margin-right: 1px; display: grid; place-items: center; background: linear-gradient(#76b9ed, #76b9ed) bottom / 61px 3px no-repeat; }
.app.active { background: linear-gradient(#76b9ed, #76b9ed) bottom / 100% 3px no-repeat #525f66; }
.tray { margin-left: auto; display: flex; align-items: stretch; }
.tray > svg { align-self: center; margin-right: 15px; }
.weather { width: 172px; font-size: 21px; line-height: 60px; white-space: nowrap; position: relative; display: flex; gap: 13px; }
.cpu { position: absolute; left: 98px; top: 4px; font-size: 18px; line-height: 24px; text-align: center; }
.cell { width: 36px; }
.ime { font-size: 23px; font-weight: 500; }
.sogou { width: 48px; }
.clock { width: 120px; text-align: center; padding-top: 5px; line-height: 25px; }
.notes { width: 52px; }
.notif { width: 72px; }
.peek { width: 1px; margin: 0 6px 0 7px; background: #66737b; }
.credit { position: absolute; right: 8px; bottom: 9px; font: 16px/20px "Liberation Sans", sans-serif; color: #ffffff99; }

.dialog { position: absolute; z-index: 5; left: 670px; top: 281px; width: 546px; border: 1px solid #5f6361; background: #f0f0f0; box-shadow: 0 3px 14px #00000055; color: #000; }
.dlg-title { height: 36px; display: flex; align-items: center; gap: 6px; padding: 0 17px 1px 4px; background: #fff; }
.dlg-title span { flex: 1; }
.dlg-body { padding: 6px 8px 7px 7px; }
.dlg-tabs { display: flex; align-items: flex-end; height: 32px; margin-bottom: -1px; position: relative; }
.dlg-tabs button { height: 31px; padding: 2px 17px 0; border: 1px solid #dadada; border-left: 0; }
.dlg-tabs button + button { padding: 1px 17px 0 18px; }
.dlg-tabs .active { height: 32px; background: #fff; border-left: 1px solid #dadada; border-bottom: 0; }
.dlg-panel { height: 327px; margin-right: 1px; padding: 8px 7px 0; background: #fff; border: 1px solid #dadada; display: flex; flex-direction: column; }
.legend { display: flex; align-items: center; gap: 3px; }
.legend::after { content: ""; flex: 1; height: 1px; background: #9a9a9a; }
.allow { margin: 6px 8px 2px; }
.allow-row { display: flex; align-items: center; padding-left: 8px; gap: 50px; }
.combo { position: relative; width: 145px; }
.combo select { display: block; appearance: none; width: 100%; height: 30px; padding-left: 3px; border: 1px solid #0a57a0; border-bottom: 0; background: #cce4f7; }
.combo::after { content: ""; position: absolute; right: 6px; top: 13px; border: 5px solid transparent; border-top-color: #000; border-bottom: 0; }
.options { position: absolute; top: 30px; left: 0; width: 145px; margin: 0; padding: 0; list-style: none; background: #fff; border: 1px solid #e3e3e3; border-top: 0; }
.options li { height: 30px; line-height: 30px; padding-left: 3px; }
.options .hover { background: #dadee6; }
.check { display: flex; align-items: center; gap: 8px; color: #a0a0a0; white-space: nowrap; }
.check input { appearance: none; width: 19px; height: 19px; border: 1px solid #ccc; display: grid; place-items: center; }
.check input:checked::before { content: ""; width: 11px; height: 5px; border: solid #ccc; border-width: 0 0 2px 2px; transform: rotate(-50deg); margin-top: -4px; }
.apply { margin: auto 0 11px 25px; }
.dlg-foot { display: flex; align-items: center; padding-top: 8px; }
.dlg-foot button { width: 116px; height: 43px; background: #e1e1e1; border: 1px solid #adadad; }
.dlg-foot button + button { margin-left: 11px; }
.dlg-foot .primary { border: 2px solid #0078d7; }
.dlg-foot button.primary { margin-left: 8px; }
.tips { flex: 1; display: flex; align-items: center; gap: 8px; padding-left: 5px; color: #4e92f0; text-decoration: none; }
```
FILE: app.js
```js
const letters = 'ABCDEFGHIJKLMNOPQRST'.split('');
const filled = {
  B2: ['早餐類型', 'under center low'],
  D2: ['餐點名稱', 'under center low'],
  B3: ['中式', 'low indent'],
  F3: ['中式', 'under center anchor'],
  G3: ['饅頭', 'under center'],
  F4: ['西式', 'center shade'],
  G4: ['漢堡', 'center'],
};

function add(parent, tag, cls, text) {
  const el = document.createElement(tag);
  if (cls) el.className = cls;
  if (text) el.textContent = text;
  parent.appendChild(el);
  return el;
}

const cols = document.getElementById('cols');
add(cols, 'col', 'c-head');
letters.forEach((l, i) => add(cols, 'col', i < 6 ? 'c-' + l.toLowerCase() : 'c-std'));

const head = add(document.getElementById('head'), 'tr');
add(head, 'th', 'all');
letters.forEach(l => add(head, 'th', l === 'F' ? 'sel' : '', l));

const body = document.getElementById('body');
for (let r = 1; r <= 16; r++) {
  const tr = add(body, 'tr');
  add(tr, 'th', r === 3 || r === 4 ? 'sel' : '', String(r));
  letters.forEach(l => {
    const [text, cls] = filled[l + r] || ['', ''];
    const td = add(tr, 'td', cls, text);
    if (l + r === 'F3') add(td, 'div', 'selection');
  });
}
```
